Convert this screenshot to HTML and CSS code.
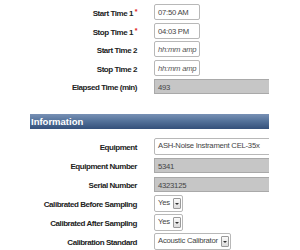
FILE: index.html
```html
<!DOCTYPE html>
<html lang="en">

<head>
    <meta charset="UTF-8">
    <title>Sampling Record</title>
    <link rel="stylesheet" href="styles.css">
</head>

<body>
    <div class="form">
        <div class="times">
            <div class="row">
                <label>Start Time 1 <span class="req">*</span></label>
                <div class="field"><span class="input time">07:50 AM</span></div>
            </div>
            <div class="row">
                <label>Stop Time 1 <span class="req">*</span></label>
                <div class="field"><span class="input time">04:03 PM</span></div>
            </div>
            <div class="row">
                <label>Start Time 2</label>
                <div class="field"><span class="input time placeholder">hh:mm amp</span></div>
            </div>
            <div class="row">
                <label>Stop Time 2</label>
                <div class="field"><span class="input time placeholder">hh:mm amp</span></div>
            </div>
            <div class="row">
                <label>Elapsed Time (min)</label>
                <div class="field"><span class="input wide readonly">493</span></div>
            </div>
        </div>

        <h2 class="section-title">Information</h2>

        <div class="info">
            <div class="row">
                <label>Equipment</label>
                <div class="field"><span class="input wide tall">ASH-Noise Instrament CEL-35x</span></div>
            </div>
            <div class="row">
                <label>Equipment Number</label>
                <div class="field"><span class="input wide readonly">5341</span></div>
            </div>
            <div class="row">
                <label>Serial Number</label>
                <div class="field"><span class="input wide readonly">4323125</span></div>
            </div>
            <div class="row">
                <label>Calibrated Before Sampling</label>
                <div class="field">
                    <span class="select"><span class="select-text">Yes</span><span class="select-btn"></span></span>
                </div>
            </div>
            <div class="row">
                <label>Calibrated After Sampling</label>
                <div class="field">
                    <span class="select"><span class="select-text">Yes</span><span class="select-btn"></span></span>
                </div>
            </div>
            <div class="row">
                <label>Calibration Standard</label>
                <div class="field">
                    <span class="select"><span class="select-text">Acoustic Calibrator</span><span class="select-btn"></span></span>
                </div>
            </div>
        </div>
    </div>
</body>

</html>
```

FILE: styles.css
```css
body {
    margin: 0;
    padding: 0;
    background-color: #fff;
    font-family: "Liberation Sans", Arial, sans-serif;
    color: #333;
}

.form {
    width: 269px;
    overflow: hidden;
}

.times {
    padding-top: 3px;
}

.row {
    display: grid;
    grid-template-columns: 137px 1fr;
    column-gap: 17px;
    align-items: center;
    height: 18.6px;
}

.info .row {
    height: 19px;
}

.row label {
    text-align: right;
    font-size: 8px;
    font-weight: bold;
    letter-spacing: -0.45px;
    color: #222;
    white-space: nowrap;
    padding-top: 2px;
}

.req {
    color: #e02020;
    font-size: 7px;
    vertical-align: 2px;
}

.field {
    display: flex;
    align-items: center;
    min-width: 0;
}

.input {
    box-sizing: border-box;
    display: block;
    height: 16px;
    padding: 3px 3px 0;
    border: 1px solid #b8b8b8;
    border-radius: 2px;
    background-color: #fff;
    font-size: 7.7px;
    letter-spacing: -0.25px;
    color: #444;
    white-space: nowrap;
    overflow: hidden;
}

.time {
    width: 46px;
}

.placeholder {
    font-style: italic;
    color: #555;
}

.wide {
    width: 130px;
    flex-shrink: 0;
}

.tall {
    height: 17px;
    padding-top: 2px;
}

.readonly {
    height: 15px;
    background-color: #c6c6c6;
    border-color: #a9a9a9;
    color: #444;
    border-radius: 0;
}

.section-title {
    margin: 18px 0 0 30px;
    height: 15px;
    padding-left: 1px;
    background: linear-gradient(to bottom, #7891b5 0%, #55739b 45%, #34507a 100%);
    color: #fff;
    font-size: 9.5px;
    font-weight: bold;
    line-height: 15px;
}

.info {
    padding-top: 8px;
}

.select {
    box-sizing: border-box;
    display: flex;
    align-items: flex-end;
    height: 17px;
    padding: 0 1px 2px 0;
    border: 1px solid #b8b8b8;
    border-radius: 2px;
    background-color: #fff;
}

.select-text {
    align-self: flex-start;
    padding: 2px 3px 0;
    font-size: 7.7px;
    letter-spacing: -0.25px;
    color: #444;
    white-space: nowrap;
}

.select-btn {
    position: relative;
    box-sizing: border-box;
    width: 8px;
    height: 11px;
    border: 1px solid #9a9a9a;
    border-radius: 1px;
    background: linear-gradient(to bottom, #fafafa, #dcdcdc);
}

.select-btn::after {
    content: "";
    position: absolute;
    left: 1px;
    top: 4px;
    border-left: 2px solid transparent;
    border-right: 2px solid transparent;
    border-top: 2px solid #333;
}
```
